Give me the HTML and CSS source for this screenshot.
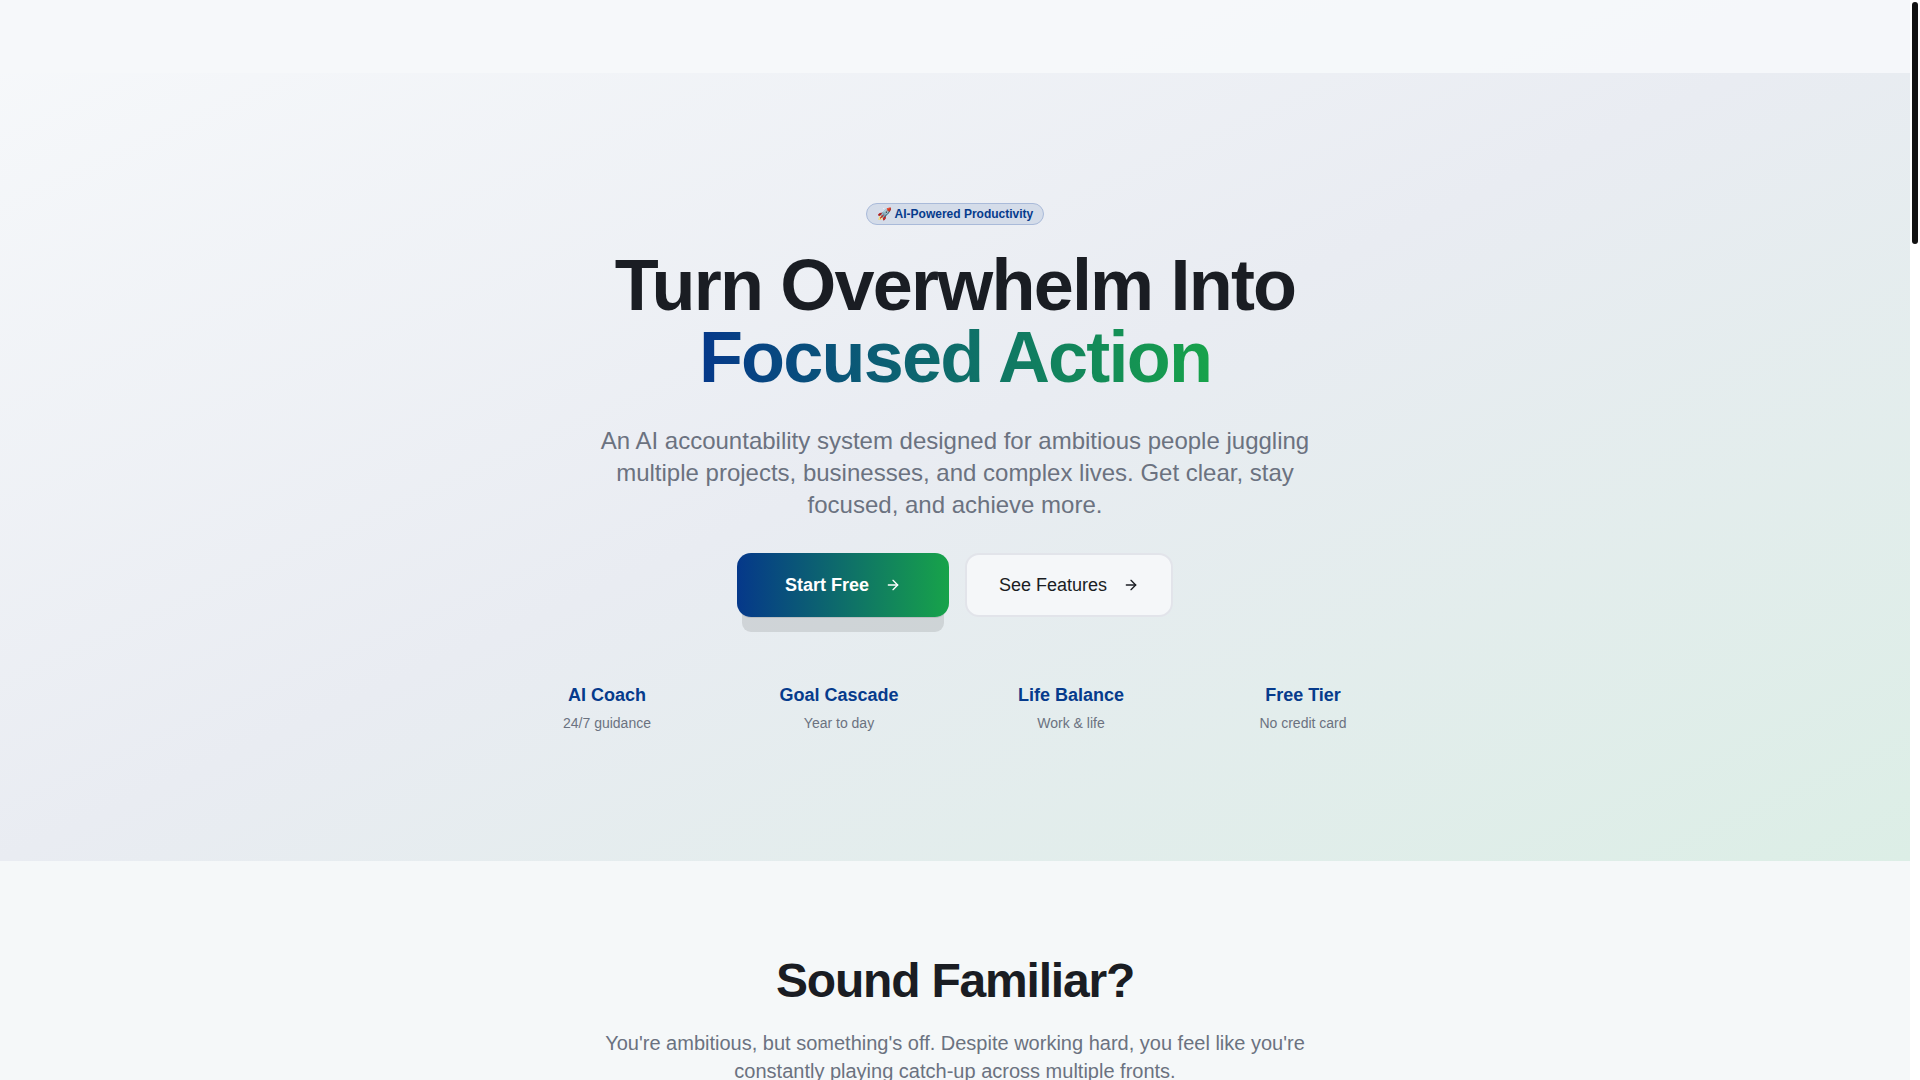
FILE: index.html
```html
<!DOCTYPE html>
<html lang="en">
<head>
    <meta charset="UTF-8">
    <meta name="viewport" content="width=device-width, initial-scale=1.0">
    <title>Turn Overwhelm Into Focused Action</title>
    <link rel="stylesheet" href="styles.css">
</head>
<body>
    <div class="page">
        <header class="topbar"></header>
        <main>
            <section class="hero">
                <span class="badge">🚀 AI-Powered Productivity</span>
                <h1>Turn Overwhelm Into <span class="gradient-text">Focused Action</span></h1>
                <p class="lead">An AI accountability system designed for ambitious people juggling multiple projects, businesses, and complex lives. Get clear, stay focused, and achieve more.</p>
                <div class="actions">
                    <button type="button" class="btn btn-primary">
                        Start Free
                        <svg class="arrow" viewBox="0 0 24 24" aria-hidden="true"><path d="M5 12h14"/><path d="m12 5 7 7-7 7"/></svg>
                    </button>
                    <button type="button" class="btn btn-outline">
                        See Features
                        <svg class="arrow" viewBox="0 0 24 24" aria-hidden="true"><path d="M5 12h14"/><path d="m12 5 7 7-7 7"/></svg>
                    </button>
                </div>
                <div class="stats">
                    <div>
                        <div class="stat-title">AI Coach</div>
                        <div class="stat-text">24/7 guidance</div>
                    </div>
                    <div>
                        <div class="stat-title">Goal Cascade</div>
                        <div class="stat-text">Year to day</div>
                    </div>
                    <div>
                        <div class="stat-title">Life Balance</div>
                        <div class="stat-text">Work &amp; life</div>
                    </div>
                    <div>
                        <div class="stat-title">Free Tier</div>
                        <div class="stat-text">No credit card</div>
                    </div>
                </div>
            </section>
            <section class="familiar">
                <h2>Sound Familiar?</h2>
                <p>You're ambitious, but something's off. Despite working hard, you feel like you're constantly playing catch-up across multiple fronts.</p>
            </section>
        </main>
    </div>
    <div class="scrollbar"><div class="thumb"></div></div>
</body>
</html>
```

FILE: styles.css
```css
* {
    box-sizing: border-box;
}
body {
    margin: 0;
    height: 100vh;
    display: flex;
    overflow: hidden;
    font-family: "Liberation Sans", Arial, sans-serif;
    color: #1a1d23;
    background: #fff;
}
h1, h2, p {
    margin: 0;
}
.page {
    flex: 1;
    overflow: hidden;
    background: #f5f8f9;
}

/* header floats over the hero gradient */
.topbar {
    position: absolute;
    top: 0;
    left: 0;
    right: 10px;
    height: 73px;
    background: rgba(246, 248, 250, 0.95);
}

.hero {
    display: flex;
    flex-direction: column;
    align-items: center;
    padding: 203px 16px 128px;
    text-align: center;
    background: linear-gradient(to bottom right, #f7f9fb, #e9ecf2 50%, #dceee6);
}
.badge {
    padding: 2px 10px;
    border: 1px solid #a9bad9;
    border-radius: 12px;
    background: #d4dce9;
    color: #063b8c;
    font-size: 12px;
    line-height: 16px;
    font-weight: bold;
}
h1 {
    max-width: 896px;
    margin-top: 24px;
    font-size: 72px;
    line-height: 72px;
    letter-spacing: -0.025em;
}
.gradient-text {
    display: table;
    margin: 0 auto;
    background: linear-gradient(to right, #05388a, #17a34a);
    background-clip: text;
    -webkit-background-clip: text;
    color: transparent;
}
.lead {
    max-width: 768px;
    margin-top: 32px;
    font-size: 24px;
    line-height: 32px;
    color: #6b7280;
}
.actions {
    display: flex;
    align-items: center;
    gap: 16px;
    margin-top: 32px;
}
.btn {
    display: flex;
    align-items: center;
    gap: 16px;
    font-family: inherit;
    font-size: 18px;
    line-height: 28px;
    cursor: pointer;
}
.btn-primary {
    padding: 18px 48px;
    border: none;
    border-radius: 14px;
    color: #fff;
    font-weight: bold;
    background: linear-gradient(to right, #05388a, #17a34a);
    box-shadow: 0 2px 0 -1px rgba(0, 0, 0, 0.1), 0 20px 0 -5px rgba(0, 0, 0, 0.1);
}
.btn-outline {
    padding: 16px 32px;
    border: 2px solid #e2e4ea;
    border-radius: 14px;
    color: #1a1d23;
    background: #f5f7f9;
}
.arrow {
    width: 16px;
    height: 16px;
    fill: none;
    stroke: currentColor;
    stroke-width: 2;
    stroke-linecap: round;
    stroke-linejoin: round;
}
.stats {
    display: grid;
    grid-template-columns: repeat(4, 1fr);
    gap: 32px;
    width: 100%;
    max-width: 896px;
    margin-top: 64px;
}
.stat-title {
    font-size: 18px;
    line-height: 28px;
    font-weight: bold;
    color: #063b8c;
}
.stat-text {
    margin-top: 4px;
    font-size: 14px;
    line-height: 20px;
    color: #6b7280;
}

.familiar {
    display: flex;
    flex-direction: column;
    align-items: center;
    padding: 96px 16px;
    text-align: center;
}
h2 {
    font-size: 48px;
    line-height: 48px;
    letter-spacing: -0.025em;
}
.familiar p {
    max-width: 768px;
    margin-top: 24px;
    font-size: 20px;
    line-height: 28px;
    color: #6b7280;
}

.scrollbar {
    width: 10px;
    padding: 2px;
}
.thumb {
    height: 242px;
    border-radius: 3px;
    background: #111;
}
```
